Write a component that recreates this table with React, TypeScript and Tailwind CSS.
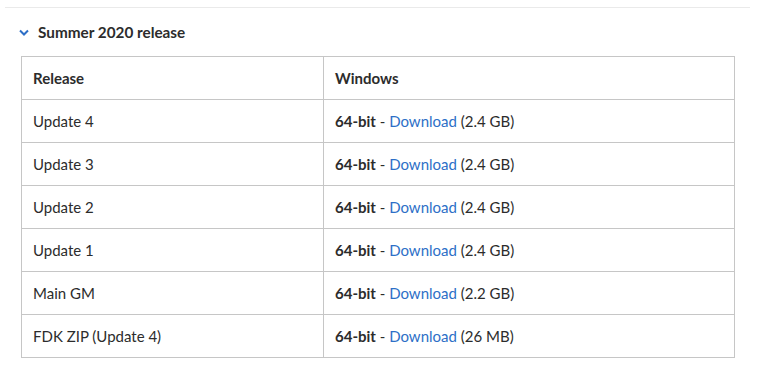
import React from "react";

interface Row {
  release: string;
  size: string;
}

const rows: Row[] = [
  { release: "Update 4", size: "2.4 GB" },
  { release: "Update 3", size: "2.4 GB" },
  { release: "Update 2", size: "2.4 GB" },
  { release: "Update 1", size: "2.4 GB" },
  { release: "Main GM", size: "2.2 GB" },
  { release: "FDK ZIP (Update 4)", size: "26 MB" },
];

const App: React.FC = () => {
  return (
    <div className="bg-white min-h-screen text-[#2c2c2c] font-['Lato',sans-serif] text-[15px]">
      <div className="pt-[7px] pl-[5px] pr-[11px]">
        <div className="h-px bg-[#eaeaea]" />
      </div>

      {/* Accordion heading */}
      <div className="flex items-center pl-[19px] mt-[16px] h-[16px]">
        <svg width="10" height="7" viewBox="0 0 10 7" className="mr-[9px]">
          <path d="M1 1.5 L5 5.5 L9 1.5" fill="none" stroke="#2d6fc7" strokeWidth="2" />
        </svg>
        <span className="font-bold text-[15.3px]">Summer 2020 release</span>
      </div>

      <div className="pl-[21px] pr-[26px] mt-[16px]">
        <table className="w-full border-collapse">
          <thead>
            <tr className="h-[43px]">
              <th className="w-[302px] border border-[#c6c6c6] text-left font-bold pl-[11px]">Release</th>
              <th className="border border-[#c6c6c6] text-left font-bold pl-[11px]">Windows</th>
            </tr>
          </thead>
          <tbody>
            {rows.map((r, i) => (
              <tr key={i} className="h-[43px]">
                <td className="border border-[#c6c6c6] pl-[11px]">{r.release}</td>
                <td className="border border-[#c6c6c6] pl-[11px]">
                  <span className="font-bold">64-bit</span> -{" "}
                  <a href="#" className="text-[#2d6fc7]">Download</a> ({r.size})
                </td>
              </tr>
            ))}
          </tbody>
        </table>
      </div>
    </div>
  );
};

export default App;
